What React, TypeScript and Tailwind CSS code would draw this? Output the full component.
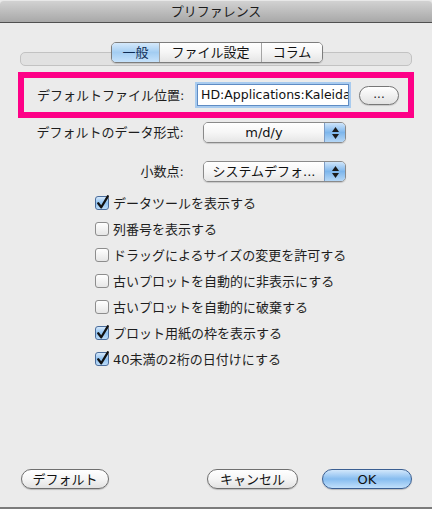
import React from 'react';

const FONT = "font-['DejaVu_Sans','Noto_Sans_CJK_JP',sans-serif]";

const checks = [
  { label: 'データツールを表示する', checked: true },
  { label: '列番号を表示する', checked: false },
  { label: 'ドラッグによるサイズの変更を許可する', checked: false },
  { label: '古いプロットを自動的に非表示にする', checked: false },
  { label: '古いプロットを自動的に破棄する', checked: false },
  { label: 'プロット用紙の枠を表示する', checked: true },
  { label: '40未満の2桁の日付けにする', checked: true },
];

const CheckBox: React.FC<{ checked: boolean }> = ({ checked }) => (
  <div
    className={`relative h-[14px] w-[14px] shrink-0 rounded-[3px] border ${
      checked
        ? 'border-[#4b6d9c] bg-gradient-to-b from-[#d6e9fb] via-[#8fc1f0] to-[#bcdcf8]'
        : 'border-[#8d8d8d] bg-gradient-to-b from-white to-[#e6e6e6]'
    }`}
  >
    {checked && (
      <svg viewBox="0 0 16 16" className="absolute left-[0px] top-[-3px] h-[16px] w-[14px]">
        <path d="M2.5 9.5 L6 14 L13.5 1.5" fill="none" stroke="#111" strokeWidth="2.6" strokeLinecap="round" strokeLinejoin="round" />
      </svg>
    )}
  </div>
);

const Popup: React.FC<{ value: string }> = ({ value }) => (
  <div className="flex h-[21px] w-[143px] overflow-hidden rounded-[5px] border border-[#8a8a8a] shadow-[0_1px_1px_rgba(0,0,0,0.15)]">
    <div className="flex flex-1 items-center justify-center bg-gradient-to-b from-white via-[#f6f6f6] to-[#e6e6e6] text-[13px] leading-none text-[#111]">
      {value}
    </div>
    <div className="flex w-[21px] flex-col items-center justify-center gap-[2px] border-l border-[#7d9cc4] bg-gradient-to-b from-[#cfe5fa] via-[#7db6ec] to-[#b5d7f6]">
      <svg width="7" height="5" viewBox="0 0 7 5">
        <path d="M3.5 0 L7 5 L0 5 Z" fill="#1b1b1b" />
      </svg>
      <svg width="7" height="5" viewBox="0 0 7 5">
        <path d="M0 0 L7 0 L3.5 5 Z" fill="#1b1b1b" />
      </svg>
    </div>
  </div>
);

const PillButton: React.FC<{ children: React.ReactNode; width: string; primary?: boolean }> = ({ children, width, primary }) => (
  <div
    className={`flex h-[20px] ${width} items-center justify-center rounded-full border text-[13px] leading-none text-[#111] shadow-[0_1px_1px_rgba(0,0,0,0.2)] ${
      primary
        ? 'border-[#3b5f92] bg-gradient-to-b from-[#d2e7fb] via-[#86bcef] to-[#c1e0fb]'
        : 'border-[#6f6f6f] bg-gradient-to-b from-white via-[#f5f5f5] to-[#e2e2e2]'
    }`}
  >
    {children}
  </div>
);

export default function App() {
  return (
    <div className={`flex h-[509px] w-[432px] flex-col border-b-2 border-[#7b7b7b] bg-[#ebebeb] ${FONT}`}>
      {/* title bar */}
      <div className="flex h-[23px] shrink-0 items-center justify-center rounded-t-[4px] border-b border-[#505050] border-t border-t-[#e8e8e8] bg-gradient-to-b from-[#d2d2d2] to-[#a8a8a8] text-[13px] leading-none text-[#1c1c1c]">
        プリファレンス
      </div>

      {/* tabs */}
      <div className="relative mx-[20px] mt-[19px] h-[24px]">
        <div className="absolute left-0 right-0 top-[10px] h-[14px] rounded-[5px] border border-[#c2c2c2] bg-[#e1e1e1]" />
        <div className="absolute left-[91px] top-0 flex h-[21px] overflow-hidden rounded-[5px] border border-[#7d7d7d] text-[13px] leading-none text-[#111] shadow-[0_1px_1px_rgba(0,0,0,0.15)]">
          <div className="flex w-[47px] items-center justify-center bg-gradient-to-b from-[#d5e9fb] via-[#a3cdf2] to-[#c6e2fb] text-[#0d2a52]">
            一般
          </div>
          <div className="flex w-[102px] items-center justify-center border-l border-[#a4a4a4] bg-gradient-to-b from-white via-[#f5f5f5] to-[#e5e5e5]">
            ファイル設定
          </div>
          <div className="flex w-[61px] items-center justify-center border-l border-[#a4a4a4] bg-gradient-to-b from-white via-[#f5f5f5] to-[#e5e5e5]">
            コラム
          </div>
        </div>
      </div>

      {/* highlighted row */}
      <div className="mx-[18px] mt-[6px] flex h-[46px] items-center border-[6px] border-[#fe0087]">
        <div className="w-[173px] shrink-0 pl-[13px] text-[13px] leading-none text-[#1e1e1e]">デフォルトファイル位置:</div>
        <div className="h-[22px] w-[152px] shrink-0 overflow-hidden whitespace-nowrap border border-[#5f8cc4] bg-white px-[3px] text-[12.5px] leading-[20px] text-[#111] shadow-[0_0_0_2px_#a8cbef]">
          HD:Applications:Kaleida
        </div>
        <div className="ml-[10px] flex h-[19px] w-[40px] items-end justify-center rounded-full border border-[#777] bg-gradient-to-b from-white to-[#e2e2e2] pb-[4px] text-[12px] leading-none text-[#222] shadow-[0_1px_1px_rgba(0,0,0,0.15)]">
          ...
        </div>
      </div>

      {/* popups */}
      <div className="mt-[4px] flex items-center">
        <div className="w-[184px] text-right text-[13px] leading-none text-[#1e1e1e]">デフォルトのデータ形式:</div>
        <div className="ml-[19px]">
          <Popup value="m/d/y" />
        </div>
      </div>
      <div className="mt-[18px] flex items-center">
        <div className="w-[184px] text-right text-[13px] leading-none text-[#1e1e1e]">小数点:</div>
        <div className="ml-[19px]">
          <Popup value="システムデフォ..." />
        </div>
      </div>

      {/* checkboxes */}
      <div className="mt-[8px] flex flex-col pl-[95px]">
        {checks.map((c) => (
          <div key={c.label} className="flex h-[26px] items-center">
            <CheckBox checked={c.checked} />
            <span className="ml-[4px] text-[13px] leading-none text-[#1e1e1e]">{c.label}</span>
          </div>
        ))}
      </div>

      {/* buttons */}
      <div className="mt-auto flex items-center pb-[18px] pl-[21px] pr-[20px]">
        <PillButton width="w-[88px]">デフォルト</PillButton>
        <div className="ml-auto flex gap-[24px]">
          <PillButton width="w-[91px]">キャンセル</PillButton>
          <PillButton width="w-[90px]" primary>
            OK
          </PillButton>
        </div>
      </div>
    </div>
  );
}
